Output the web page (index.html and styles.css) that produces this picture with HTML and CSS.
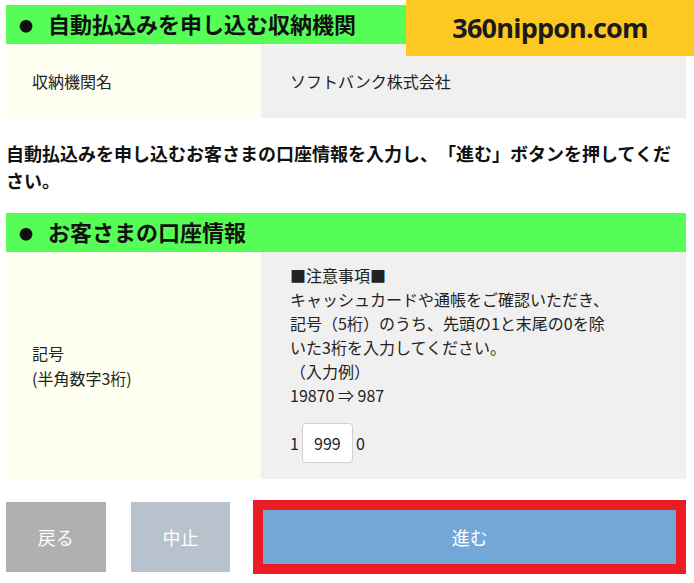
FILE: index.html
```html
<!DOCTYPE html>
<html lang="ja">
<head>
    <meta charset="UTF-8">
    <meta name="viewport" content="width=device-width, initial-scale=1.0">
    <title>口座振替お申し込み</title>
    <link rel="stylesheet" href="styles.css">
</head>
<body>

    <!-- サイトのロゴ -->
    <div class="site-badge">360nippon.com</div>

    <div class="page">

        <!-- 収納機関 -->
        <h2 class="section-title"><span class="dot">●</span>自動払込みを申し込む収納機関</h2>
        <div class="form-row row-short">
            <div class="form-label">収納機関名</div>
            <div class="form-value">ソフトバンク株式会社</div>
        </div>

        <p class="lead">自動払込みを申し込むお客さまの口座情報を入力し、「進む」ボタンを押してください。</p>

        <!-- 口座情報 -->
        <h2 class="section-title"><span class="dot">●</span>お客さまの口座情報</h2>
        <div class="form-row">
            <div class="form-label">記号<br>(半角数字3桁)</div>
            <div class="form-value">
                <p class="note">■注意事項■<br>キャッシュカードや通帳をご確認いただき、記号（5桁）のうち、先頭の1と末尾の0を除いた3桁を入力してください。<br>（入力例）<br>19870 ⇒ 987</p>
                <div class="code-field">
                    <span>1</span>
                    <input type="text" value="999" maxlength="3">
                    <span>0</span>
                </div>
            </div>
        </div>

        <!-- ボタン -->
        <div class="actions">
            <button class="btn btn-back">戻る</button>
            <button class="btn btn-cancel">中止</button>
            <button class="btn btn-next">進む</button>
        </div>
    </div>

</body>
</html>
```

FILE: styles.css
```css
* {
    box-sizing: border-box;
    margin: 0;
    padding: 0;
}

body {
    font-family: "Noto Sans CJK JP", "Noto Sans", sans-serif;
    font-size: 16px;
    color: #222;
    background-color: #fff;
    text-spacing-trim: space-all;
}

.page {
    padding: 5px 8px 0 6px;
}

/* ロゴ */
.site-badge {
    position: absolute;
    top: 0;
    right: 0;
    width: 288px;
    height: 56px;
    background-color: #fec822;
    color: #1a1a1a;
    font-family: "Open Sans", sans-serif;
    font-weight: bold;
    font-size: 27px;
    letter-spacing: -0.8px;
    line-height: 56px;
    text-align: center;
}

/* 見出し */
.section-title {
    background-color: #57fd57;
    color: #111;
    font-size: 22px;
    font-weight: bold;
    line-height: 37px;
    padding-left: 13px;
}

.section-title .dot {
    font-size: 14px;
    display: inline-block;
    width: 29px;
    vertical-align: 2px;
}

/* フォームの行 */
.form-row {
    display: grid;
    grid-template-columns: 255px 1fr;
    min-height: 74px;
}

.form-label {
    background-color: #fefff0;
    padding: 0 26px;
    display: flex;
    flex-direction: column;
    justify-content: center;
    line-height: 25px;
}

.form-value {
    background-color: #f0f0f0;
    padding: 11px 29px 16px;
    display: flex;
    flex-direction: column;
    justify-content: center;
    line-height: 24px;
}

.row-short .form-value {
    padding-top: 0;
    padding-bottom: 0;
}

.note {
    max-width: 20.5em;
}

.code-field {
    display: flex;
    align-items: center;
    gap: 3px;
    margin-top: 16px;
}

.code-field input {
    width: 51px;
    height: 40px;
    border: 1px solid #d0d0d0;
    border-radius: 4px;
    background-color: #fff;
    font-family: inherit;
    font-size: 16px;
    color: #222;
    text-align: center;
}

.lead {
    font-size: 18px;
    font-weight: bold;
    line-height: 27px;
    margin: 22px 0 19px;
    color: #111;
}

/* ボタン */
.actions {
    display: flex;
    align-items: center;
    margin-top: 21px;
}

.btn {
    height: 70px;
    width: 100px;
    border: none;
    color: #fff;
    font-family: inherit;
    font-size: 18px;
    cursor: pointer;
}

.btn-back {
    background-color: #b0b0b0;
}

.btn-cancel {
    background-color: #b8c2cc;
    margin-left: 25px;
}

.btn-next {
    background-color: #72a7d6;
    border: 10px solid #ec1c24;
    width: 434px;
    height: 74px;
    margin-left: 23px;
}
```
